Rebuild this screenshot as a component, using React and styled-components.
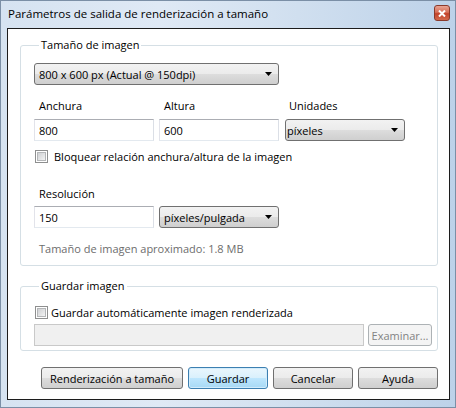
import React from 'react'
import styled, { createGlobalStyle } from 'styled-components'

const GlobalStyle = createGlobalStyle`
  html, body {
    margin: 0;
    padding: 0;
  }
  body {
    font-family: "Open Sans", "Noto Sans", sans-serif;
    font-size: 11px;
    color: #000;
    background: #fff;
  }
`

const Window = styled.div`
  width: 456px;
  height: 408px;
  box-sizing: border-box;
  border: 1px solid #7b8fa6;
  background: linear-gradient(90deg, #d6e3f1 0%, #dfe9f5 35%, #d3e1f0 60%, #bdd2e9 100%);
  display: flex;
  flex-direction: column;
  padding: 0 5px 7px 6px;
`

const TitleBar = styled.div`
  height: 27px;
  display: flex;
  align-items: flex-start;
  justify-content: space-between;
  padding-left: 1px;
`

const Title = styled.div`
  font-size: 11.5px;
  line-height: 16px;
  margin-top: 5px;
`

const CloseButton = styled.div`
  width: 16px;
  height: 16px;
  box-sizing: border-box;
  margin-top: 4px;
  border: 1px solid #8a3a2c;
  border-radius: 3px;
  background: linear-gradient(#e8a493 0%, #d66e57 45%, #c2432a 55%, #d3694c 100%);
  display: flex;
  align-items: center;
  justify-content: center;
`

const Client = styled.div`
  flex: 1;
  background: #fff;
  border: 1px solid #1c1c1c;
  padding: 8px 11px 9px 12px;
  display: flex;
  flex-direction: column;
`

const Group = styled.fieldset`
  margin: ${(p) => p.$top || 0}px 0 0 0;
  padding: ${(p) => p.$pad};
  border: 1px solid #d5dfe5;
  border-radius: 3px;
  min-width: 0;
`

const Legend = styled.legend`
  margin-left: 5px;
  padding: 0 2px;
  line-height: 16px;
`

const Grid = styled.div`
  display: grid;
  grid-template-columns: ${(p) => p.$cols};
  column-gap: 5px;
  margin-top: ${(p) => p.$top || 0}px;
`

const Label = styled.div`
  line-height: 16px;
  padding-left: 5px;
  color: ${(p) => (p.$muted ? '#6d6d6d' : '#000')};
  margin-top: ${(p) => p.$top || 0}px;
  margin-bottom: ${(p) => p.$bottom || 0}px;
`

const Combo = styled.div`
  width: ${(p) => p.$w}px;
  height: 22px;
  box-sizing: border-box;
  margin-left: ${(p) => p.$shift || 0}px;
  border: 1px solid #707070;
  border-radius: 3px;
  background: linear-gradient(#f2f2f2 0%, #ebebeb 50%, #dddddd 50%, #cfcfcf 100%);
  display: flex;
  align-items: center;
  justify-content: space-between;
  padding-left: ${(p) => p.$padLeft ?? 4}px;
  padding-right: 6px;
`

const TextBox = styled.div`
  width: ${(p) => p.$w}px;
  height: 22px;
  box-sizing: border-box;
  border: 1px solid;
  border-color: #abadb3 #dbdfe6 #e3e9ef #e2e3ea;
  background: ${(p) => (p.$disabled ? '#f0f0f0' : '#fff')};
  ${(p) => p.$disabled && 'border-color: #c9c9c9;'}
  display: flex;
  align-items: center;
  padding-left: 4px;
`

const CheckRow = styled.label`
  display: flex;
  align-items: center;
  height: 16px;
  gap: ${(p) => p.$gap}px;
  padding-left: 1px;
  margin-top: ${(p) => p.$top || 0}px;
`

const CheckBox = styled.span`
  width: 13px;
  height: 13px;
  box-sizing: border-box;
  border: 1px solid #8e8f8f;
  background: #fff;
  padding: 1px;
  display: inline-flex;

  &::after {
    content: '';
    flex: 1;
    border: 1px solid #b4b6b8;
    background: linear-gradient(135deg, #cfd1d4 0%, #e4e5e6 60%, #f4f4f4 100%);
  }
`

const Row = styled.div`
  display: flex;
  gap: ${(p) => p.$gap || 5}px;
  margin-top: ${(p) => p.$top || 0}px;
  justify-content: ${(p) => p.$justify || 'flex-start'};
`

const Button = styled.div`
  width: ${(p) => p.$w}px;
  height: 22px;
  box-sizing: border-box;
  border: 1px solid #707070;
  border-radius: 3px;
  background: linear-gradient(#f2f2f2 0%, #ebebeb 50%, #dddddd 50%, #cfcfcf 100%);
  display: flex;
  align-items: center;
  justify-content: center;

  ${(p) =>
    p.$primary &&
    `
    border-color: #3c7fb1;
    background: linear-gradient(#eaf6fd 0%, #d9f0fc 50%, #bee6fd 50%, #a7d9f5 100%);
    box-shadow: inset 0 0 0 1px #d2ecfb;
  `}

  ${(p) =>
    p.$disabled &&
    `
    border-color: #adb2b5;
    background: #f4f4f4;
    color: #838383;
  `}
`

const Arrow = () => (
  <svg width="7" height="4" viewBox="0 0 7 4">
    <polygon points="0,0 7,0 3.5,4" fill="#000" />
  </svg>
)

const CloseGlyph = () => (
  <svg width="8" height="7" viewBox="0 0 8 7">
    <path d="M1 0.5 L7 6.5 M7 0.5 L1 6.5" stroke="#fff" strokeWidth="2" />
  </svg>
)

export default function App() {
  return (
    <>
      <GlobalStyle />
      <Window>
        <TitleBar>
          <Title>Parámetros de salida de renderización a tamaño</Title>
          <CloseButton>
            <CloseGlyph />
          </CloseButton>
        </TitleBar>
        <Client>
          <Group $pad="10px 13px 8px 13px">
            <Legend>Tamaño de imagen</Legend>
            <Combo $w={245}>
              <span>800 x 600 px (Actual @ 150dpi)</span>
              <Arrow />
            </Combo>
            <Grid $cols="120px 120px 121px" $top={13}>
              <Label $bottom={5}>Anchura</Label>
              <Label $bottom={5}>Altura</Label>
              <Label $bottom={5}>Unidades</Label>
              <TextBox $w={120}>800</TextBox>
              <TextBox $w={120}>600</TextBox>
              <Combo $w={120} $padLeft={1} $shift={1}>
                <span>píxeles</span>
                <Arrow />
              </Combo>
            </Grid>
            <CheckRow $gap={6} $top={7}>
              <CheckBox />
              Bloquear relación anchura/altura de la imagen
            </CheckRow>
            <Label $top={22} $bottom={4}>Resolución</Label>
            <Row>
              <TextBox $w={120}>150</TextBox>
              <Combo $w={120}>
                <span>píxeles/pulgada</span>
                <Arrow />
              </Combo>
            </Row>
            <Label $muted $top={13}>Tamaño de imagen aproximado: 1.8 MB</Label>
          </Group>
          <Group $top={12} $pad="10px 4px 4px 13px">
            <Legend>Guardar imagen</Legend>
            <CheckRow $gap={3}>
              <CheckBox />
              Guardar automáticamente imagen renderizada
            </CheckRow>
            <Row $gap={4} $top={4}>
              <TextBox $w={330} $disabled />
              <Button $w={64} $disabled>Examinar...</Button>
            </Row>
          </Group>
          <Row $top={16} $justify="flex-end">
            <Button $w={142}>Renderización a tamaño</Button>
            <Button $w={80} $primary>Guardar</Button>
            <Button $w={80}>Cancelar</Button>
            <Button $w={80}>Ayuda</Button>
          </Row>
        </Client>
      </Window>
    </>
  )
}
